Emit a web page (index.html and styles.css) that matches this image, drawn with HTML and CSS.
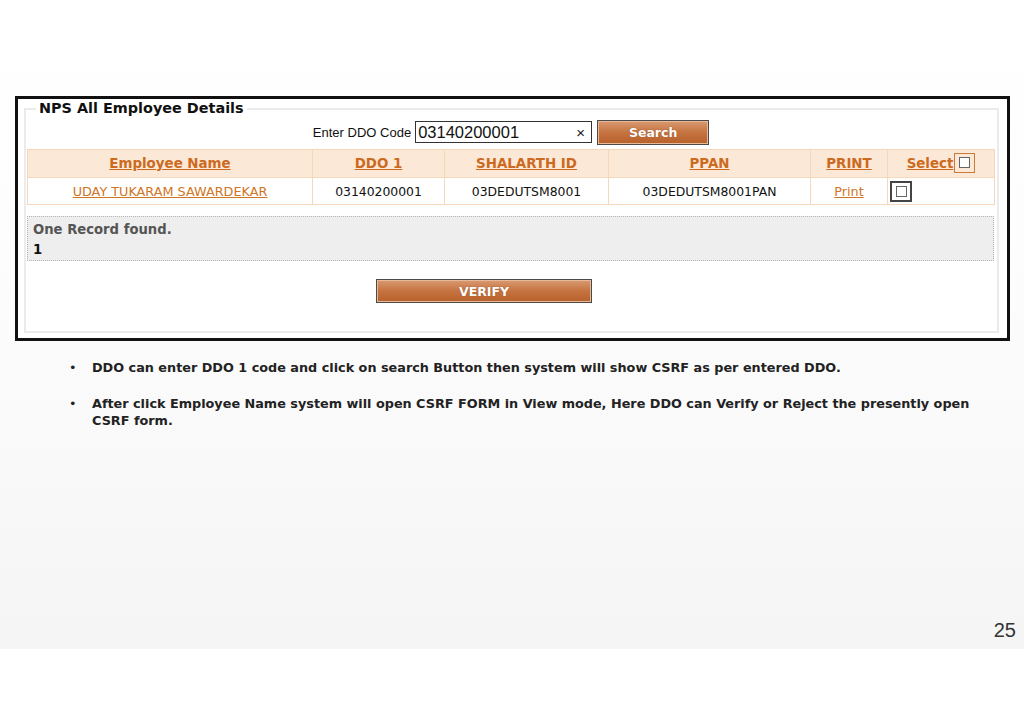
FILE: index.html
```html
<!DOCTYPE html>
<html>
<head>
<meta charset="utf-8">
<link rel="stylesheet" href="styles.css">
</head>
<body>
<div class="slide">
  <div class="frame">
    <fieldset class="panel">
      <legend>NPS All Employee Details</legend>
      <div class="searchbar">
        <label class="lbl">Enter DDO Code</label>
        <div class="input"><span>03140200001</span><span class="clear">×</span></div>
        <button class="btn search">Search</button>
      </div>
      <table class="grid">
        <colgroup>
          <col style="width:285px"><col style="width:132px"><col style="width:164px"><col style="width:202px"><col style="width:77px"><col style="width:107px">
        </colgroup>
        <tr class="head">
          <th><a>Employee Name</a></th>
          <th><a>DDO 1</a></th>
          <th><a>SHALARTH ID</a></th>
          <th><a>PPAN</a></th>
          <th><a>PRINT</a></th>
          <th><a>Select</a><span class="chk head-chk"><span></span></span></th>
        </tr>
        <tr class="row">
          <td><a class="link">UDAY TUKARAM SAWARDEKAR</a></td>
          <td>03140200001</td>
          <td>03DEDUTSM8001</td>
          <td>03DEDUTSM8001PAN</td>
          <td><a class="link">Print</a></td>
          <td class="left"><span class="chk row-chk"><span></span></span></td>
        </tr>
      </table>
      <div class="records">
        <div class="found">One Record found.</div>
        <div class="page">1</div>
      </div>
      <div class="actions">
        <button class="btn verify">VERIFY</button>
      </div>
    </fieldset>
  </div>
  <ul class="notes">
    <li>DDO can enter DDO 1 code and click on search Button then system will show CSRF as per entered DDO.</li>
    <li>After click Employee Name system will open CSRF FORM in View mode, Here DDO can Verify or Reject the presently open CSRF form.</li>
  </ul>
  <div class="pageno">25</div>
</div>
</body>
</html>
```

FILE: styles.css
```css
html, body {
  margin: 0;
  padding: 0;
  background: #ffffff;
}
.slide {
  position: relative;
  width: 1024px;
  height: 649px;
  background: linear-gradient(to bottom, #ffffff 0%, #fdfdfd 40%, #f5f5f5 100%);
  padding-top: 96px;
  box-sizing: border-box;
  font-family: "DejaVu Sans", Verdana, sans-serif;
}
.frame {
  margin-left: 15px;
  width: 995px;
  height: 245px;
  box-sizing: border-box;
  border: 3px solid #111;
  background: #ffffff;
  padding: 1px 9px 5px 6px;
}
.panel {
  margin: 0;
  height: 100%;
  box-sizing: border-box;
  border: 2px solid #ebebeb;
  padding: 0 2px 0 1px;
}
.panel legend {
  margin-left: 9px;
  padding: 0 3px;
  font-size: 14.4px;
  font-weight: bold;
  color: #111;
  line-height: 17px;
}
.searchbar {
  display: flex;
  justify-content: center;
  align-items: center;
  height: 26px;
  margin-top: 2px;
}
.lbl {
  font-family: "Liberation Sans", Arial, sans-serif;
  font-size: 13px;
  color: #111;
  margin-right: 4px;
}
.input {
  width: 177px;
  height: 22px;
  box-sizing: border-box;
  border: 1px solid #333;
  display: flex;
  justify-content: space-between;
  align-items: center;
  padding: 0 6px 0 2px;
  font-family: "Liberation Sans", Arial, sans-serif;
  font-size: 16.5px;
  color: #111;
  margin-right: 5px;
}
.clear {
  font-size: 15px;
  color: #222;
}
.btn {
  font-family: "DejaVu Sans", Verdana, sans-serif;
  font-weight: bold;
  font-size: 12.5px;
  color: #ffffff;
  text-shadow: 0 0 1px #8a4a20;
  background: linear-gradient(to bottom, #d99a72 0%, #c57340 50%, #b8612b 100%);
  border: 1px solid #4a4a4a;
  box-shadow: inset 0 0 0 1px #e7b999;
  padding: 0;
  cursor: pointer;
}
.search {
  width: 112px;
  height: 25px;
}
.grid {
  margin-top: 4px;
  width: 967px;
  border-collapse: collapse;
  table-layout: fixed;
  font-size: 12.4px;
}
.grid th, .grid td {
  border: 1px solid #f5d7bc;
  text-align: center;
  padding: 0;
}
.grid .head th {
  height: 27px;
  background: #fce8d6;
  font-size: 13.4px;
  font-weight: bold;
}
.grid .head a {
  color: #cc6a1f;
  text-decoration: underline;
}
.grid .row td {
  height: 26px;
  color: #111;
  background: #ffffff;
}
.grid td.left {
  text-align: left;
  padding-left: 2px;
}
.link {
  color: #d07526;
  text-decoration: underline;
}
.grid .row td .link:first-child {
  font-size: 12.8px;
}
.chk {
  display: inline-flex;
  align-items: center;
  justify-content: center;
  box-sizing: border-box;
  vertical-align: middle;
}
.chk span {
  width: 11px;
  height: 11px;
  box-sizing: border-box;
  border: 1px solid #666;
  background: #fff;
}
.head-chk {
  width: 21px;
  height: 20px;
  border: 1px solid #cc7a3a;
  margin-left: 1px;
  margin-top: -2px;
}
.row-chk {
  width: 22px;
  height: 21px;
  border: 2px solid #444;
}
.records {
  margin-top: 11px;
  width: 967px;
  height: 45px;
  box-sizing: border-box;
  background: #eeeeee;
  border: 1px dotted #b5b5b5;
  padding: 3px 5px 0;
  font-size: 13.2px;
  font-weight: bold;
  line-height: 20px;
}
.found {
  color: #555;
}
.page {
  color: #111;
}
.actions {
  padding-top: 18px;
  padding-left: 349px;
}
.verify {
  width: 216px;
  height: 24px;
  font-size: 12.5px;
}
.notes {
  list-style: none;
  margin: 18px 0 0 0;
  padding: 0 0 0 92px;
  width: 884px;
  font-size: 12.8px;
  font-weight: bold;
  color: #222;
  line-height: 17px;
}
.notes li {
  position: relative;
  margin-bottom: 19px;
}
.notes li::before {
  content: "•";
  position: absolute;
  left: -23px;
  font-weight: normal;
}
.pageno {
  position: absolute;
  right: 8px;
  top: 619px;
  font-family: "Liberation Sans", Arial, sans-serif;
  font-size: 20px;
  color: #333;
}
```
